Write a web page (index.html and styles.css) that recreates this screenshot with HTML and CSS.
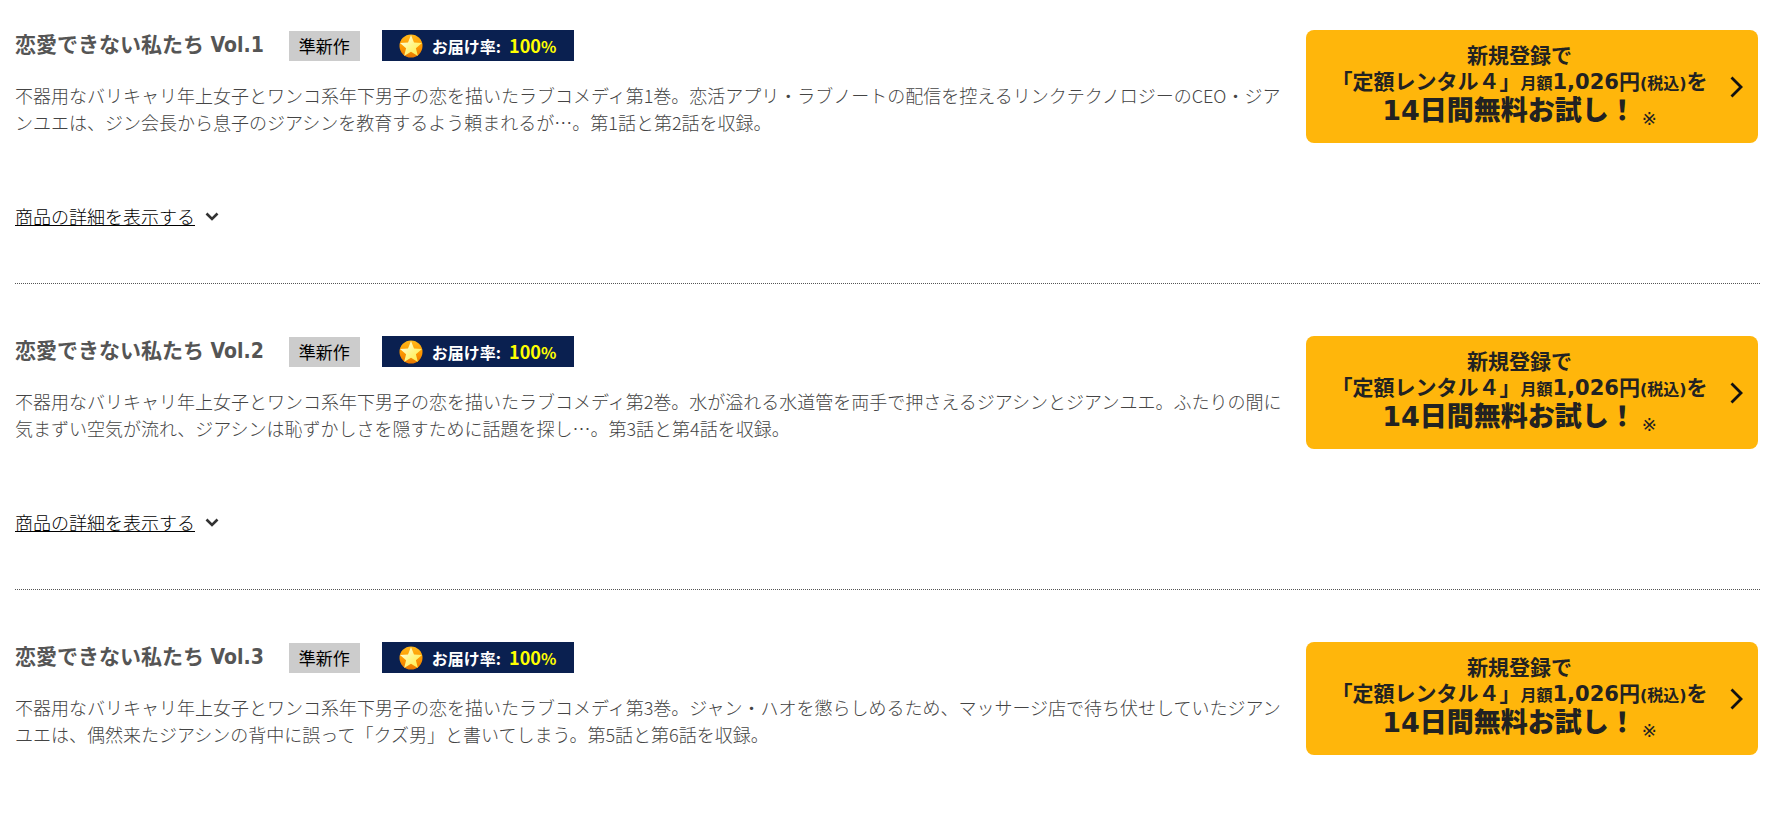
FILE: index.html
```html
<!DOCTYPE html>
<html lang="ja">
<head>
  <meta charset="UTF-8">
  <title>恋愛できない私たち</title>
  <link rel="stylesheet" href="styles.css">
</head>
<body>
  <svg width="0" height="0" class="defs" aria-hidden="true">
    <defs>
      <linearGradient id="medal" x1="0" y1="0" x2="0" y2="1">
        <stop offset="0" stop-color="#ffb81a"/>
        <stop offset="0.5" stop-color="#ff9a00"/>
        <stop offset="1" stop-color="#e87800"/>
      </linearGradient>
      <linearGradient id="shine" x1="0" y1="0" x2="1" y2="1">
        <stop offset="0" stop-color="#ffffff"/>
        <stop offset="0.5" stop-color="#fff68a"/>
        <stop offset="1" stop-color="#ffe93c"/>
      </linearGradient>
      <symbol id="star" viewBox="0 0 24 24">
        <circle cx="12" cy="12" r="11.5" fill="url(#medal)"/>
        <path d="M12 1l3 7.4 8 .6-6.100 5.200 2 7.800L12 17.800 5.100 22l2-7.800L1 9l8-.6z" fill="url(#shine)"/>
      </symbol>
      <symbol id="down" viewBox="0 0 14 9">
        <path d="M1.500 1.500L7 7l5.500-5.500" fill="none" stroke="#333" stroke-width="2.600"/>
      </symbol>
      <symbol id="next" viewBox="0 0 13 22">
        <path d="M1.500 1.500L11 11l-9.500 9.500" fill="none" stroke="#111" stroke-width="2.800"/>
      </symbol>
    </defs>
  </svg>

  <ul class="volumes">
    <li class="volume">
      <div class="info">
        <div class="heading">
          <h2>恋愛できない私たち Vol.1</h2>
          <span class="tag">準新作</span>
          <span class="rate"><svg class="star"><use href="#star"/></svg>お届け率:<span class="num">100<small>%</small></span></span>
        </div>
        <p class="story">不器用なバリキャリ年上女子とワンコ系年下男子の恋を描いたラブコメディ第1巻。恋活アプリ・ラブノートの配信を控えるリンクテクノロジーのCEO・ジアンユエは、ジン会長から息子のジアシンを教育するよう頼まれるが…。第1話と第2話を収録。</p>
        <a class="more" href="#"><span>商品の詳細を表示する</span><svg><use href="#down"/></svg></a>
      </div>
      <a class="trial" href="#">
        <span class="trial-text">
          新規登録で<br>
          「定額レンタル４」<small>月額</small>1,026円<small>(税込)</small>を<br>
          <strong>14日間無料お試し！</strong><sub>※</sub>
        </span>
        <svg><use href="#next"/></svg>
      </a>
    </li>

    <li class="volume">
      <div class="info">
        <div class="heading">
          <h2>恋愛できない私たち Vol.2</h2>
          <span class="tag">準新作</span>
          <span class="rate"><svg class="star"><use href="#star"/></svg>お届け率:<span class="num">100<small>%</small></span></span>
        </div>
        <p class="story">不器用なバリキャリ年上女子とワンコ系年下男子の恋を描いたラブコメディ第2巻。水が溢れる水道管を両手で押さえるジアシンとジアンユエ。ふたりの間に気まずい空気が流れ、ジアシンは恥ずかしさを隠すために話題を探し…。第3話と第4話を収録。</p>
        <a class="more" href="#"><span>商品の詳細を表示する</span><svg><use href="#down"/></svg></a>
      </div>
      <a class="trial" href="#">
        <span class="trial-text">
          新規登録で<br>
          「定額レンタル４」<small>月額</small>1,026円<small>(税込)</small>を<br>
          <strong>14日間無料お試し！</strong><sub>※</sub>
        </span>
        <svg><use href="#next"/></svg>
      </a>
    </li>

    <li class="volume">
      <div class="info">
        <div class="heading">
          <h2>恋愛できない私たち Vol.3</h2>
          <span class="tag">準新作</span>
          <span class="rate"><svg class="star"><use href="#star"/></svg>お届け率:<span class="num">100<small>%</small></span></span>
        </div>
        <p class="story">不器用なバリキャリ年上女子とワンコ系年下男子の恋を描いたラブコメディ第3巻。ジャン・ハオを懲らしめるため、マッサージ店で待ち伏せしていたジアンユエは、偶然来たジアシンの背中に誤って「クズ男」と書いてしまう。第5話と第6話を収録。</p>
      </div>
      <a class="trial" href="#">
        <span class="trial-text">
          新規登録で<br>
          「定額レンタル４」<small>月額</small>1,026円<small>(税込)</small>を<br>
          <strong>14日間無料お試し！</strong><sub>※</sub>
        </span>
        <svg><use href="#next"/></svg>
      </a>
    </li>
  </ul>
</body>
</html>
```
FILE: styles.css
```css
body {
  margin: 0;
  background: #fff;
  color: #444;
  font-family: "Noto Sans CJK JP", sans-serif;
  font-size: 18px;
  line-height: 27px;
}

.defs {
  display: block;
}

.volumes {
  margin: 0;
  padding: 0 18px 0 15px;
  list-style: none;
}

.volume {
  display: flex;
  align-items: flex-start;
  gap: 16px;
  padding: 30px 2px 53px 0;
  border-bottom: 1px dotted #555;
}

.volume + .volume {
  padding-top: 52px;
}

.volume:last-child {
  padding-bottom: 24px;
  border-bottom: none;
}

.info {
  flex: 1;
}

.heading {
  display: flex;
  align-items: center;
  gap: 22px;
}

.heading h2 {
  margin: 0 3px 0 0;
  padding-bottom: 2px;
  color: #555;
  font-family: "DejaVu Sans Condensed", "Noto Sans CJK JP", sans-serif;
  font-size: 21px;
  line-height: 28px;
}

.tag {
  padding: 0 10px;
  background: #ccc;
  color: #000;
  font-size: 17px;
  line-height: 30px;
}

.rate {
  display: flex;
  align-items: center;
  padding: 0 18px 0 17px;
  background: #0a2050;
  color: #fff;
  font-size: 16px;
  font-weight: bold;
  line-height: 30px;
}

.star {
  width: 24px;
  height: 24px;
  margin-right: 9px;
}

.num {
  margin-left: 8px;
  color: #ff0;
  font-size: 18px;
}

.num small {
  font-size: 16px;
}

.story {
  margin: 21px 0 0;
  font-weight: 300;
}

.more {
  display: inline-flex;
  align-items: center;
  gap: 10px;
  margin-top: 67px;
  color: #000;
  font-weight: 300;
  text-decoration: none;
}

.more span {
  text-decoration: underline;
}

.more svg {
  width: 14px;
  height: 9px;
}

.trial {
  display: flex;
  align-items: center;
  box-sizing: border-box;
  width: 452px;
  padding: 0 15px 0 3px;
  border-radius: 8px;
  background: #ffb60b;
  color: #222;
  font-family: "DejaVu Sans", "Noto Sans CJK JP", sans-serif;
  font-size: 21px;
  font-weight: bold;
  line-height: 26px;
  text-align: center;
  text-decoration: none;
}

.trial-text {
  flex: 1;
  padding: 13px 0 17px;
}

.trial small {
  font-size: 16px;
}

.trial strong {
  font-size: 27px;
  line-height: 28px;
}

.trial sub {
  margin-left: 6px;
  font-size: 18px;
  font-weight: normal;
  line-height: 0;
}

.trial svg {
  width: 13px;
  height: 22px;
}
```
